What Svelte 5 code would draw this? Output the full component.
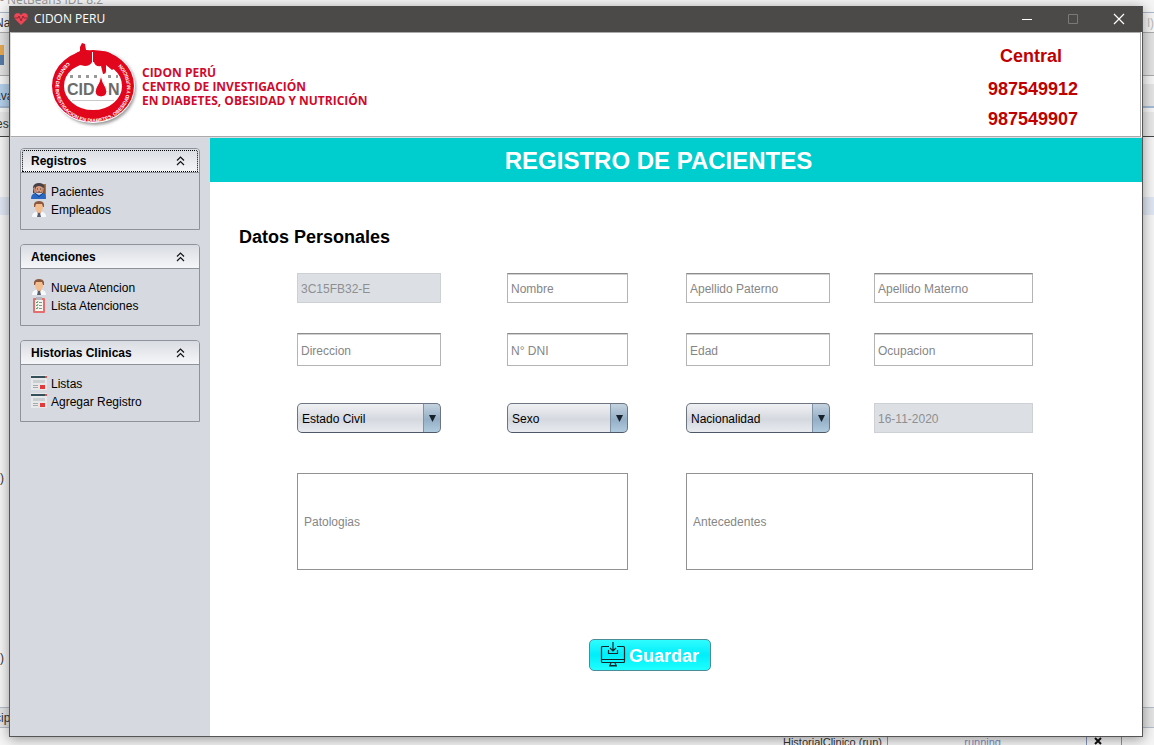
<script>
  let groups = $state([
    { title: 'Registros', open: true, focused: true, items: [['Pacientes', 'patient'], ['Empleados', 'doctor']] },
    { title: 'Atenciones', open: true, focused: false, items: [['Nueva Atencion', 'doctor'], ['Lista Atenciones', 'list']] },
    { title: 'Historias Clinicas', open: true, focused: false, items: [['Listas', 'news'], ['Agregar Registro', 'news']] }
  ]);
</script>

{#snippet icon(kind)}
  <svg class="icon" width="16" height="16" viewBox="0 0 16 16" aria-hidden="true">
    {#if kind === 'patient'}
      <path d="M12 1h3v14h-3z" fill="#a87545" />
      <path d="M13 2v12" stroke="#5f3d22" />
      <path d="M2 10V4q1-4 6-4t5 4v6z" fill="#4b3f46" />
      <path d="M5 4q3-2 6 0v4q-3 4-6 0z" fill="#d99c7f" />
      <path d="M2 5l2-1 2 5-2 3zM13 5l-2-1-1 5 2 2z" fill="#bc8978" />
      <path d="M0 16q0-5 4-6l4 2 4-2q3 1 3 6z" fill="#2868c4" />
      <path d="M4 10l4 4 4-4" fill="none" stroke="#174887" />
      <path d="M6 6h1M9 6h1M7 9h2" stroke="#50343a" />
    {:else if kind === 'doctor'}
      <path d="M1 16q0-5 5-5h4q5 0 5 5z" fill="#f7fafc" />
      <path d="M6 9h4v3l-2 2-2-2z" fill="#e7ab7f" />
      <path d="M4 3h8v4q-1 4-4 4T4 7z" fill="#f3bd8f" />
      <path d="M3 6V3q1-3 5-3t5 3v3h-1L11 3H5L4 6z" fill="#8d593d" />
      <path d="M7 12h2l1 4H6z" fill="#555f70" />
    {:else if kind === 'list'}
      <rect x="2" y="1" width="12" height="15" rx="1" fill="#e66d70" />
      <rect x="4" y="3" width="8" height="11" fill="#f5f6ed" />
      <path d="M5 0h6v3H5z" fill="#b4b9c0" />
      <path d="M5 5l1 1 1-2M5 8l1 1 1-2M5 11l1 1 1-2" fill="none" stroke="#4aa568" />
      <path d="M8 5.500h3M8 8.500h3M8 11.500h3" stroke="#88939b" />
    {:else}
      <path d="M0 0h16v15H0z" fill="#e6e8ea" />
      <path d="M0 1h14v2H0z" fill="#34505a" />
      <path d="M14 1h2v2h-2z" fill="#d9534f" />
      <path d="M3 5v3M5 5v3M7 5v3M9 5v3M11 5v3M13 5v3" stroke="#b0b5b9" />
      <path d="M2 10.500h5M2 12.500h5" stroke="#a2aaae" />
      <path d="M9 10h5v4H9z" fill="#e5383b" />
    {/if}
  </svg>
{/snippet}

{#snippet field(label, disabled = false)}
  {#if disabled}
    <input class="field" type="text" value={label.value} aria-label={label.name} disabled />
  {:else}
    <input class="field" type="text" placeholder={label} aria-label={label} />
  {/if}
{/snippet}

{#snippet combo(label)}
  <div class="combo">
    <select aria-label={label}><option>{label}</option></select>
    <svg width="7" height="7" viewBox="0 0 7 7" aria-hidden="true"><path d="M0 0h7L3.500 7z" fill="#17212b" /></svg>
  </div>
{/snippet}

<div class="desktop">
  <div class="ide" aria-hidden="true">
    <div class="piece caption">- NetBeans IDE 8.2</div>
    <div class="piece menubar"><span>Na</span><span>l)</span></div>
    <div class="piece toolbar"><i></i></div>
    <div class="piece tabs"><span>ava</span></div>
    <div class="piece subtabs"><span>es</span></div>
    <div class="piece band"></div>
    <div class="piece code first">)</div>
    <div class="piece code second">)</div>
    <div class="piece crumb">cip</div>
    <div class="piece run">HistorialClinico (run)</div>
    <div class="piece running">running</div>
    <div class="piece stop"><svg width="8" height="8" viewBox="0 0 8 8"><path d="M1 1l6 6M7 1L1 7" stroke="#111" stroke-width="2" /></svg></div>
  </div>

  <div class="window">
    <div class="titlebar">
      <svg width="14" height="14" viewBox="0 0 14 14" aria-hidden="true">
        <path d="M7 13L1 7Q-1 3 2 1.500T7 3q2-3 5-1.500T13 7z" fill="#ee4655" />
        <path d="M1 6h3l1-2 2 5 2-5 1 2h3" fill="none" stroke="#8e2936" />
      </svg>
      <span class="name">CIDON PERU</span>
      <button aria-label="Minimizar"><svg width="12" height="12" viewBox="0 0 12 12"><path d="M1 6.500h10" stroke="#fff" /></svg></button>
      <button aria-label="Maximizar" disabled><svg width="12" height="12" viewBox="0 0 12 12"><path d="M1.500 1.500h9v9h-9z" fill="none" stroke="#7b7977" /></svg></button>
      <button aria-label="Cerrar"><svg width="12" height="12" viewBox="0 0 12 12"><path d="M1 1l10 10M11 1L1 11" stroke="#fff" stroke-width="1.200" /></svg></button>
    </div>

    <header>
      <svg class="logo" width="92" height="88" viewBox="48 40 92 88" role="img" aria-label="CIDON">
        <defs>
          <filter id="soft" x="-20%" y="-20%" width="140%" height="140%"><feGaussianBlur stdDeviation="1.500" /></filter>
          <path id="ringText" d="M68 62A37.500 34.500 0 1 0 118 62" />
        </defs>
        <ellipse cx="95" cy="88" rx="41" ry="37" fill="#999" filter="url(#soft)" />
        <ellipse cx="93" cy="86" rx="42" ry="37" fill="#fff" />
        <ellipse cx="93" cy="86" rx="35" ry="30" fill="#fff" stroke="#e2061c" stroke-width="12" />
        <path d="M68 62q5-8 12-11v-4l2-4 3 1 1 6q5 0 6 4v8q-2 4-7 4l-5-1-8 4z" fill="#e2061c" />
        <path d="M94 56q2-5 8-5 9 0 14 8l3 6-7 5-6-5v6q0 3-3 3l-2-8q-6 1-7-4z" fill="#e2061c" />
        <path d="M92.500 52v15" stroke="#fff" />
        <text class="ring"><textPath href="#ringText">CENTRO DE INVESTIGACION EN DIABETES, OBESIDAD Y NUTRICION</textPath></text>
        <path d="M70 76.500h30M108 76.500h10" stroke="#999" stroke-width="3" stroke-dasharray="3 5" />
        <text class="mark" x="67" y="95">CID</text>
        <text class="mark" x="108" y="95">N</text>
        <path d="M101 75q1 7 5 13 3 8-5 9-8-1-5-9 4-6 5-13z" fill="#e2061c" stroke="#fff" />
        <path d="M72 100.500h42" stroke="#c8c8c8" />
      </svg>
      <div class="brand">CIDON PERÚ<br />CENTRO DE INVESTIGACIÓN<br />EN DIABETES, OBESIDAD Y NUTRICIÓN</div>
      <div class="contact"><strong>Central</strong><span>987549912</span><span>987549907</span></div>
    </header>

    <div class="body">
      <nav>
        {#each groups as group}
          <section>
            <button class="head" class:focused={group.focused} aria-expanded={group.open} onclick={() => (group.open = !group.open)}>
              {group.title}
              <svg width="9" height="10" viewBox="0 0 9 10" aria-hidden="true"><path d="M1 4.500l3.500-3.500 3.500 3.500M1 9l3.500-3.500L8 9" fill="none" stroke="#111" stroke-width="1.200" /></svg>
            </button>
            {#if group.open}
              <ul>
                {#each group.items as [text, kind]}
                  <li><a href="#top">{@render icon(kind)}<span>{text}</span></a></li>
                {/each}
              </ul>
            {/if}
          </section>
        {/each}
      </nav>

      <main>
        <h1>REGISTRO DE PACIENTES</h1>
        <h2>Datos Personales</h2>
        <form onsubmit={(e) => e.preventDefault()}>
          <div class="fields">
            {@render field({ name: 'Codigo', value: '3C15FB32-E' }, true)}
            {@render field('Nombre')}
            {@render field('Apellido Paterno')}
            {@render field('Apellido Materno')}
            {@render field('Direccion')}
            {@render field('N° DNI')}
            {@render field('Edad')}
            {@render field('Ocupacion')}
            {@render combo('Estado Civil')}
            {@render combo('Sexo')}
            {@render combo('Nacionalidad')}
            {@render field({ name: 'Fecha', value: '16-11-2020' }, true)}
            <input class="large left" type="text" placeholder="Patologias" aria-label="Patologias" />
            <input class="large right" type="text" placeholder="Antecedentes" aria-label="Antecedentes" />
          </div>
          <div class="actions">
            <button class="save" type="submit">
              <svg width="26" height="26" viewBox="0 0 26 26" fill="none" stroke="#10282c" stroke-width="1.200" aria-hidden="true">
                <path d="M9 4.500H2.500q-1 0-1 1v14q0 1 1 1h21q1 0 1-1v-14q0-1-1-1H17M1.500 17.500h23M11 20.500l-1 3h6l-1-3M9 24h8M8.500 8v3.500h9V8M13 0v9M10 6l3 3 3-3" />
              </svg>
              <span>Guardar</span>
            </button>
          </div>
        </form>
      </main>
    </div>
  </div>
</div>

<style>
  :global(body) { margin: 0; }
  .desktop, .desktop * { box-sizing: border-box; }
  .desktop {
    position: relative;
    display: flex;
    min-height: 100vh;
    padding: 6px 11px 8px 9px;
    overflow: hidden;
    background: #f5f5f5;
    font: 12px/18px "Liberation Sans", Arial, sans-serif;
    color: #000;
  }
  button, input, select { font: inherit; color: inherit; margin: 0; }

  .ide { position: absolute; inset: 0; color: #333; }
  .piece { position: absolute; left: 0; right: 0; white-space: nowrap; }
  .caption { top: -9px; color: #999; font: 12px/18px "Open Sans", sans-serif; }
  .menubar { top: 12px; height: 20px; line-height: 20px; display: flex; justify-content: space-between; border-top: 1px solid #a9b8cc; }
  .menubar span:first-child { margin-left: -5px; }
  .menubar span:last-child { color: #bbb; }
  .toolbar { top: 32px; height: 44px; border: solid #aaa; border-width: 1px 0; background: #e2e2e2; }
  .toolbar i { display: block; width: 4px; height: 20px; margin-top: 12px; background: linear-gradient(#e5a850 50%, #547ba6 50%); }
  .tabs { top: 84px; height: 24px; line-height: 24px; background: linear-gradient(90deg, #b4d0ec 50%, #e4e4e4 50%); border-bottom: 2px solid #a4bad4; }
  .tabs span { margin-left: -6px; }
  .subtabs { top: 112px; height: 25px; line-height: 24px; background: #e8e8e8; border-bottom: 1px solid #444; }
  .subtabs span { margin-left: -4px; }
  .band { top: 197px; height: 18px; background: #dfe6f3; }
  .first { top: 469px; }
  .second { top: 649px; }
  .crumb { bottom: 17px; height: 21px; line-height: 20px; text-indent: -5px; background: #e4e4e4; border: solid #b4bccb; border-width: 1px 0; }
  .run { left: auto; right: 266px; bottom: -6px; padding-right: 5px; border-right: 1px solid #8295ba; font-size: 11px; }
  .running { left: auto; right: 153px; bottom: -6px; color: #7e8fc4; font-size: 11px; }
  .stop { left: auto; right: 32px; bottom: 0; width: 36px; height: 8px; display: flex; justify-content: center; border: solid #8295ba; border-width: 0 1px; padding-right: 12px; }

  .window {
    position: relative;
    flex: 1;
    display: flex;
    flex-direction: column;
    border: 1px solid #555;
    border-top-color: #4b4a48;
    background: #fff;
    box-shadow: 0 2px 12px #0006;
  }
  .titlebar { display: flex; align-items: center; height: 25px; padding-left: 4px; background: #4b4a48; color: #fff; font-family: "Open Sans", sans-serif; }
  .titlebar > * { margin-bottom: 1px; }
  .name { flex: 1; padding-left: 6px; }
  .titlebar button { display: grid; place-items: center; width: 46px; height: 24px; padding: 0; border: 0; background: none; }

  header { display: flex; align-items: flex-start; height: 105px; margin-right: 1px; border: 1px solid #aaa; border-left-color: #ddd; }
  .logo { margin: 7px 0 0 37px; }
  .ring { font: bold 5px "Liberation Sans", sans-serif; fill: #fff; }
  .mark { font: bold 16px "Liberation Sans", sans-serif; fill: #6b6b69; }
  .brand { flex: 1; padding: 33px 0 0 2px; color: #d00a2c; font: bold 12px/14px "Open Sans", sans-serif; }
  .contact { width: 214px; padding-top: 8px; display: flex; flex-direction: column; align-items: center; color: #c00000; font-weight: bold; font-size: 18px; line-height: 30px; }
  .contact strong { padding: 0 4px 3px 0; }

  .body { flex: 1; display: flex; border-top: 1px solid #dcdde2; }
  nav { width: 200px; display: flex; flex-direction: column; gap: 14px; padding: 10px; background: #d6d9e0; }
  section { border: 1px solid #8e929b; border-radius: 4px 4px 0 0; }
  .head { display: flex; align-items: center; justify-content: space-between; width: 100%; height: 24px; padding: 0 14px 0 10px; border: 0; border-bottom: 1px solid #8e929b; border-radius: 3px 3px 0 0; background: linear-gradient(#d9dce2, #f5f6f8); font-weight: bold; }
  .focused { outline: 1px dotted #000; outline-offset: -2px; }
  ul { list-style: none; margin: 0; padding: 9px 10px 11px; }
  a { display: flex; align-items: center; gap: 4px; height: 18px; color: inherit; text-decoration: none; }
  a span, .save span { padding-top: 2px; }

  main { flex: 1; min-width: 0; }
  h1 { margin: 0; padding: 2px 35px 0 0; background: #00cdcd; color: #fff; font-size: 24px; line-height: 42px; text-align: center; }
  h2 { margin: 0; padding: 40px 29px 21px; font-size: 18px; line-height: 30px; }
  .fields {
    display: grid;
    grid-template-columns: 144fr 66fr 121fr 58fr 144fr 44fr 159fr;
    grid-template-rows: 60px 70px 70px auto;
    align-items: start;
    padding: 0 109px 0 87px;
  }
  .fields > :global(:nth-child(4n + 1)) { grid-column: 1; }
  .fields > :global(:nth-child(4n + 2)) { grid-column: 3; }
  .fields > :global(:nth-child(4n + 3)) { grid-column: 5; }
  .fields > :global(:nth-child(4n + 4)) { grid-column: 7; }
  .field { width: 100%; min-width: 0; height: 30px; padding: 2px 3px 0; border: 1px solid #b4b4b4; border-top: 1px solid #8c8c8c; border-radius: 0; background: #fff; box-shadow: inset 0 1px #d0d0d0; }
  .field:nth-child(n + 5):nth-child(-n + 8) { height: 33px; }
  .field:disabled { border-color: #cdd1d6; background: #dce0e5; color: #8e8f91; box-shadow: none; }
  input::placeholder { color: #868686; opacity: 1; }
  .combo { position: relative; }
  select { appearance: none; display: block; width: 100%; height: 30px; padding: 2px 20px 0 4px; border: 1px solid #6d7482; border-bottom-color: #4d5968; border-radius: 5px; background: linear-gradient(#7f93a5, #7f93a5) right 16px top / 1px 100% no-repeat, linear-gradient(#c5d3e0, #94afc6 55%, #b0cade) right / 16px 100% no-repeat, linear-gradient(#f0f1f4, #d5d8df 55%, #e8eaef); }
  .combo svg { position: absolute; right: 5px; top: 12px; pointer-events: none; }
  .large { height: 97px; padding: 0 6px; border: 1px solid #929292; border-radius: 0; background: #fff; }
  .fields > .left { grid-column: 1 / 4; }
  .fields > .right { grid-column: 5 / 8; }
  .actions { display: flex; justify-content: center; padding: 69px 52px 24px 0; }
  .save { display: flex; align-items: center; gap: 3px; width: 122px; height: 32px; padding: 0 10px; border: 1px solid #4b8d97; border-radius: 5px; background: linear-gradient(#2ffcff, #00eefa 50%, #1fffff); color: #fff; font-size: 18px; font-weight: bold; }
</style>
